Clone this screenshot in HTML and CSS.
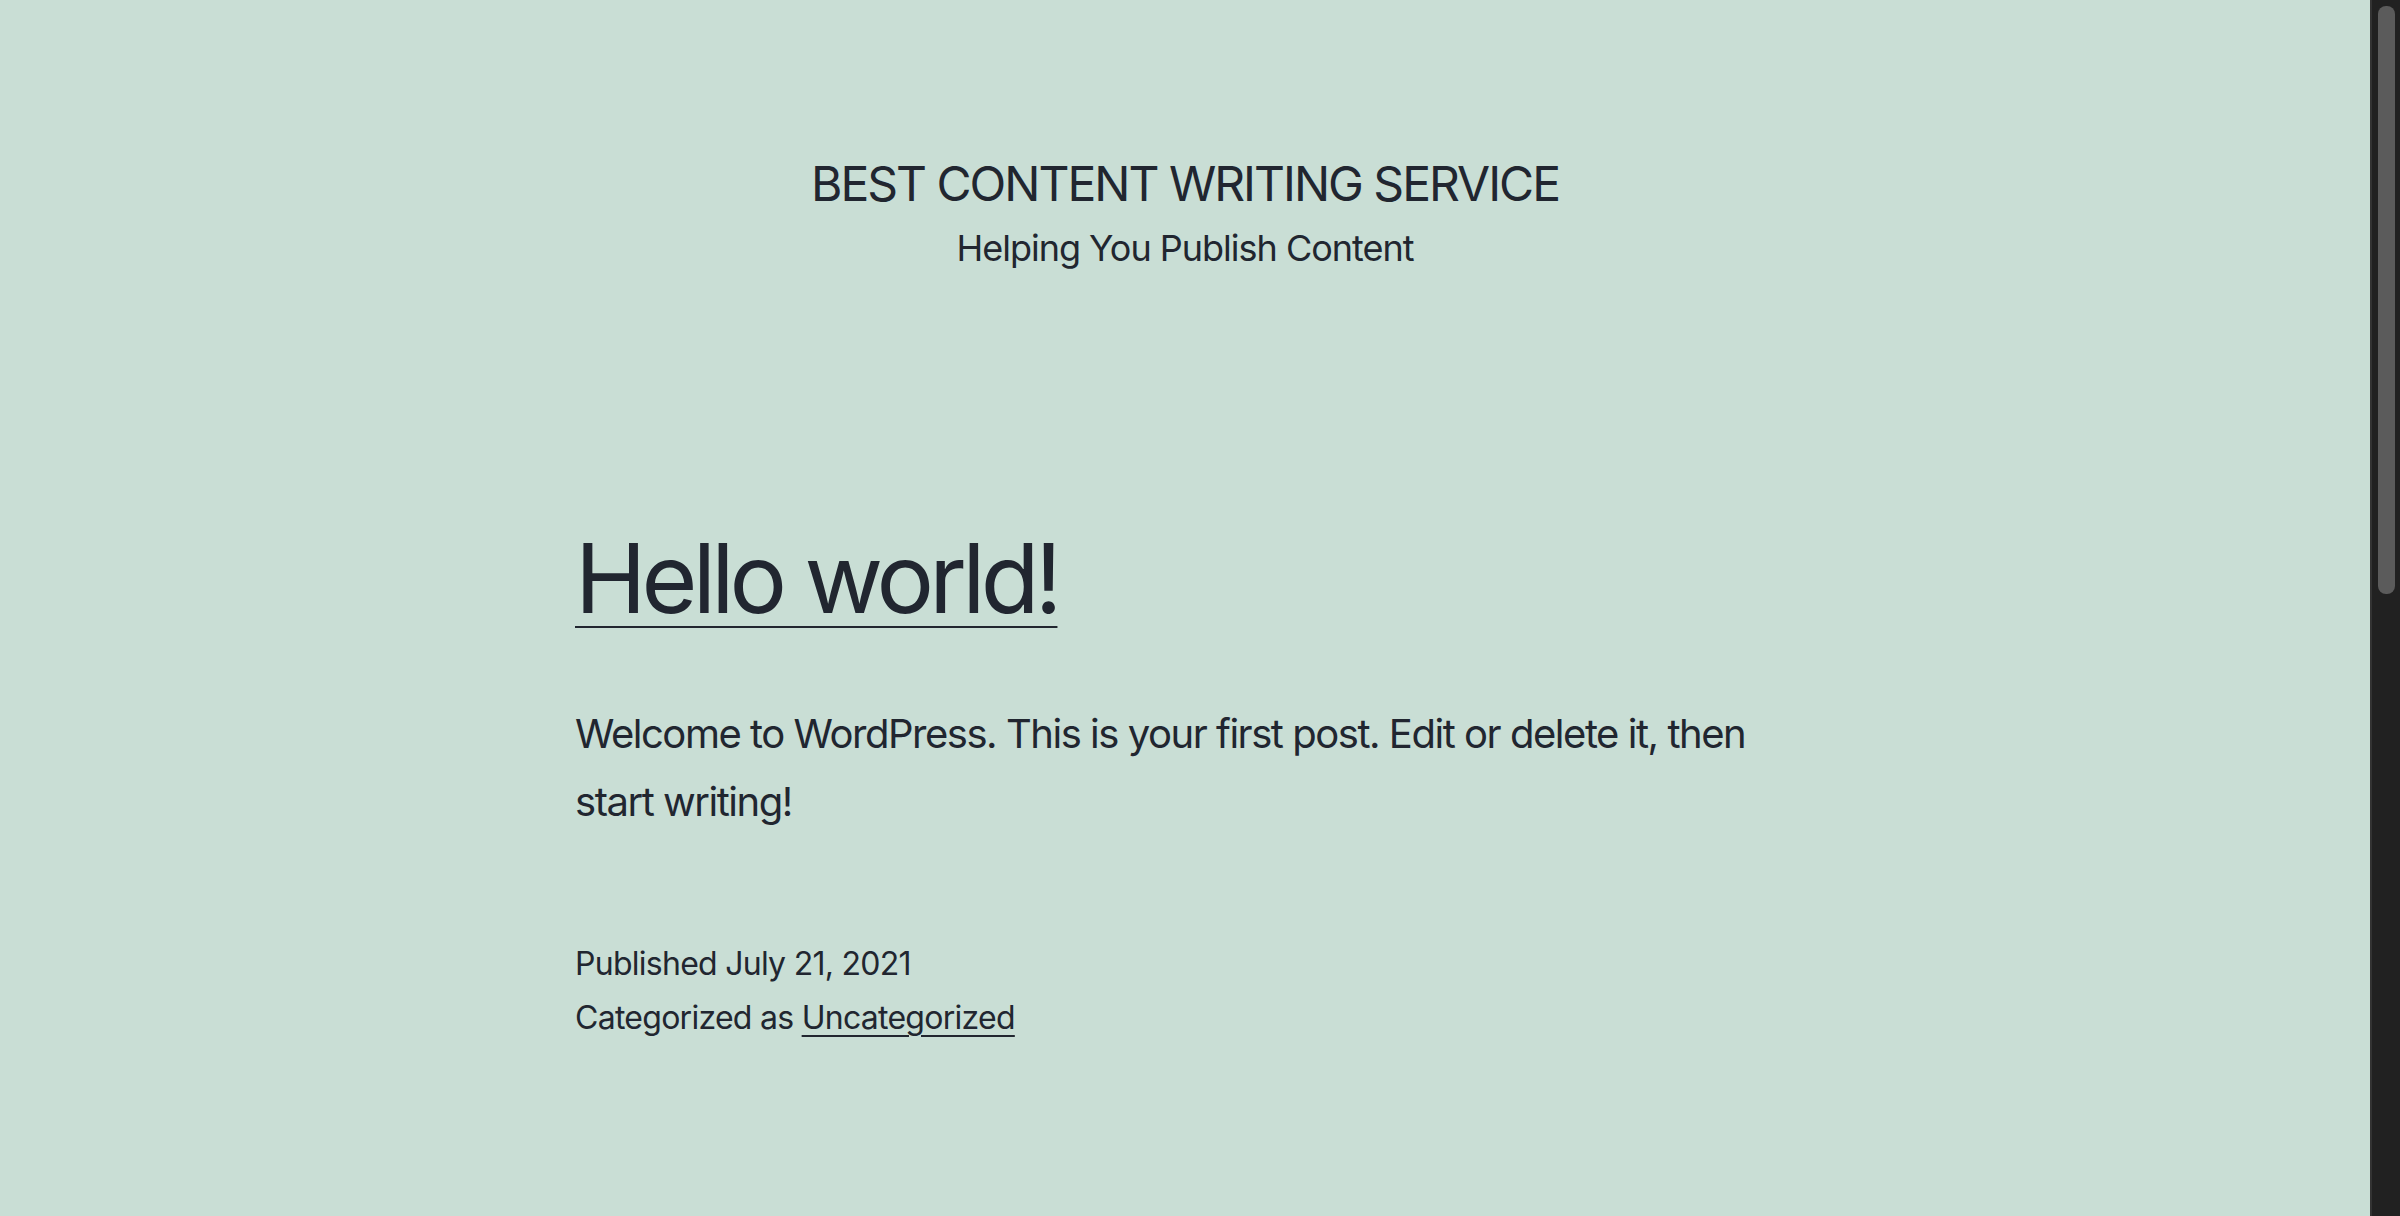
FILE: index.html
```html
<!DOCTYPE html>
<html lang="en">
<head>
<meta charset="utf-8">
<title>Best Content Writing Service</title>
<link rel="stylesheet" href="styles.css">
</head>
<body>
<div class="window">
  <div class="page">
    <header class="site-header">
      <p class="site-title">BEST CONTENT WRITING SERVICE</p>
      <p class="site-description">Helping You Publish Content</p>
    </header>
    <main class="site-main">
      <article class="post">
        <h2 class="entry-title"><a href="#">Hello world!</a></h2>
        <div class="entry-content">
          <p>Welcome to WordPress. This is your first post. Edit or delete it, then start writing!</p>
        </div>
        <footer class="entry-footer">
          <div class="posted-on">Published July 21, 2021</div>
          <div class="cat-links">Categorized as <a href="#">Uncategorized</a></div>
        </footer>
      </article>
    </main>
  </div>
  <div class="scrollbar"><div class="thumb"></div></div>
</div>
</body>
</html>
```
FILE: styles.css
```css
html, body {
  margin: 0;
  padding: 0;
  height: 100%;
}
body {
  background: #c9ded5;
  color: #212630;
  font-family: Inter, "Noto Sans", "Liberation Sans", sans-serif;
  overflow: hidden;
}
.window {
  display: flex;
  height: 1216px;
}
.page {
  flex: 1;
  min-width: 0;
}
.site-header {
  padding-top: 154px;
  text-align: center;
}
.site-title {
  margin: 0;
  font-size: 48px;
  line-height: 60px;
  font-weight: 400;
  letter-spacing: -2px;
}
.site-description {
  margin: 10px 0 0;
  font-size: 36px;
  line-height: 48px;
  letter-spacing: -1px;
}
.site-main {
  width: 1220px;
  margin: 0 auto;
  padding-top: 244px;
}
.entry-title {
  margin: 0;
  font-size: 96px;
  line-height: 124px;
  font-weight: 400;
  letter-spacing: -4.8px;
}
.entry-title a,
.cat-links a {
  color: inherit;
  text-decoration: underline;
  text-decoration-thickness: 2px;
}
.entry-title a {
  text-underline-offset: 13px;
}
.entry-content {
  margin-top: 60px;
}
.entry-content p {
  margin: 0;
  font-size: 40px;
  line-height: 68px;
  letter-spacing: -1.47px;
}
.entry-footer {
  margin-top: 101px;
  font-size: 32px;
  line-height: 54px;
  letter-spacing: -0.73px;
}
.cat-links a {
  text-underline-offset: 6px;
}
.scrollbar {
  width: 30px;
  flex: none;
  background: #212121;
  border-left: 2px solid #333;
  box-sizing: border-box;
  padding: 6px 5px 0 6px;
}
.thumb {
  height: 588px;
  border-radius: 8px;
  background: #5b5b5b;
}
```
